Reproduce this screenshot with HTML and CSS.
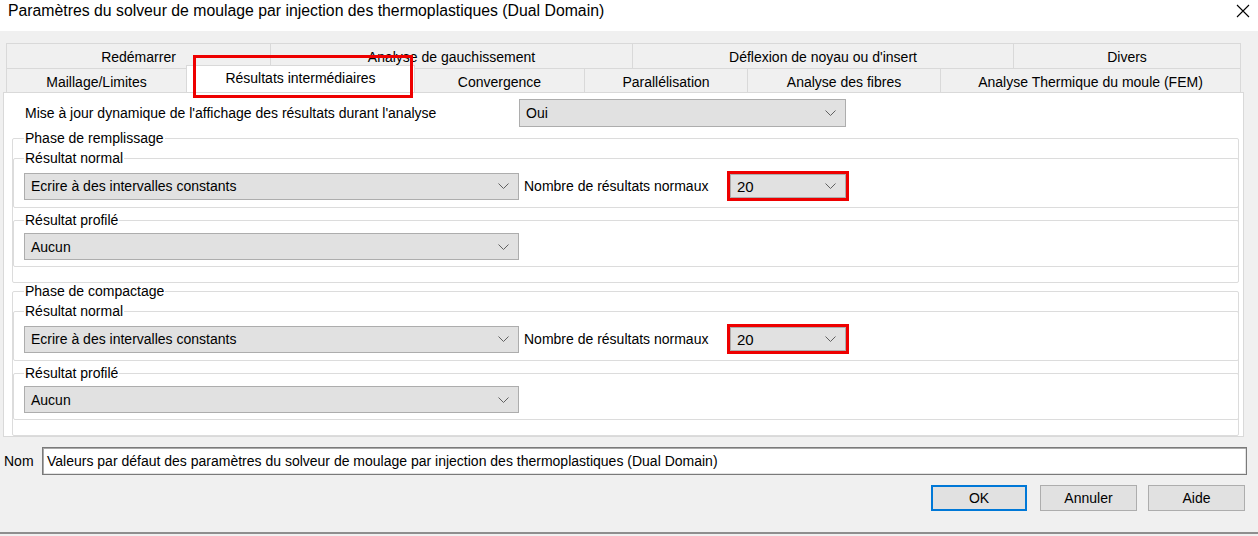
FILE: index.html
```html
<!DOCTYPE html>
<html lang="fr">
<head>
  <meta charset="UTF-8">
  <title>Paramètres du solveur</title>
  <link rel="stylesheet" href="styles.css">
</head>
<body>
  <div class="window">
    <div class="titlebar">
      <span class="title">Paramètres du solveur de moulage par injection des thermoplastiques (Dual Domain)</span>
      <svg class="close" width="14" height="14" viewBox="0 0 14 14">
        <path d="M1 1 L13 13 M13 1 L1 13" stroke="#000" stroke-width="1.1" fill="none"/>
      </svg>
    </div>

    <div class="content">
      <div class="tabs">
        <div class="tab-row back">
          <div class="tab">Redémarrer</div>
          <div class="tab">Analyse de gauchissement</div>
          <div class="tab">Déflexion de noyau ou d'insert</div>
          <div class="tab">Divers</div>
        </div>
        <div class="tab-row front">
          <div class="tab">Maillage/Limites</div>
          <div class="tab selected">Résultats intermédiaires<span class="mark tab-mark"></span></div>
          <div class="tab">Convergence</div>
          <div class="tab">Parallélisation</div>
          <div class="tab">Analyse des fibres</div>
          <div class="tab">Analyse Thermique du moule (FEM)</div>
        </div>
      </div>

      <div class="panel">
        <div class="dyn-row">
          <span class="dyn-label">Mise à jour dynamique de l'affichage des résultats durant l'analyse</span>
          <div class="combo combo-oui"><span>Oui</span><svg class="chev" width="11" height="6" viewBox="0 0 11 6"><path d="M0.5 0.5 L5.5 5.5 L10.5 0.5" stroke="#606060" fill="none"/></svg></div>
        </div>

        <fieldset class="phase">
          <legend>Phase de remplissage</legend>
          <fieldset class="sub">
            <legend>Résultat normal</legend>
            <div class="sub-row">
              <div class="combo combo-wide"><span>Ecrire à des intervalles constants</span><svg class="chev" width="11" height="6" viewBox="0 0 11 6"><path d="M0.5 0.5 L5.5 5.5 L10.5 0.5" stroke="#606060" fill="none"/></svg></div>
              <span class="count-label">Nombre de résultats normaux</span>
              <div class="mark-box">
                <div class="combo combo-count"><span>20</span><svg class="chev" width="11" height="6" viewBox="0 0 11 6"><path d="M0.5 0.5 L5.5 5.5 L10.5 0.5" stroke="#606060" fill="none"/></svg></div>
              </div>
            </div>
          </fieldset>
          <fieldset class="sub">
            <legend>Résultat profilé</legend>
            <div class="sub-row">
              <div class="combo combo-wide"><span>Aucun</span><svg class="chev" width="11" height="6" viewBox="0 0 11 6"><path d="M0.5 0.5 L5.5 5.5 L10.5 0.5" stroke="#606060" fill="none"/></svg></div>
            </div>
          </fieldset>
        </fieldset>

        <fieldset class="phase">
          <legend>Phase de compactage</legend>
          <fieldset class="sub">
            <legend>Résultat normal</legend>
            <div class="sub-row">
              <div class="combo combo-wide"><span>Ecrire à des intervalles constants</span><svg class="chev" width="11" height="6" viewBox="0 0 11 6"><path d="M0.5 0.5 L5.5 5.5 L10.5 0.5" stroke="#606060" fill="none"/></svg></div>
              <span class="count-label">Nombre de résultats normaux</span>
              <div class="mark-box">
                <div class="combo combo-count"><span>20</span><svg class="chev" width="11" height="6" viewBox="0 0 11 6"><path d="M0.5 0.5 L5.5 5.5 L10.5 0.5" stroke="#606060" fill="none"/></svg></div>
              </div>
            </div>
          </fieldset>
          <fieldset class="sub">
            <legend>Résultat profilé</legend>
            <div class="sub-row">
              <div class="combo combo-wide"><span>Aucun</span><svg class="chev" width="11" height="6" viewBox="0 0 11 6"><path d="M0.5 0.5 L5.5 5.5 L10.5 0.5" stroke="#606060" fill="none"/></svg></div>
            </div>
          </fieldset>
        </fieldset>
      </div>

      <div class="name-row">
        <span class="name-label">Nom</span>
        <div class="name-input">Valeurs par défaut des paramètres du solveur de moulage par injection des thermoplastiques (Dual Domain)</div>
      </div>

      <div class="buttons">
        <button class="btn btn-default">OK</button>
        <button class="btn">Annuler</button>
        <button class="btn">Aide</button>
      </div>
    </div>
  </div>
</body>
</html>
```

FILE: styles.css
```css
body {
  margin: 0;
  padding: 0;
  width: 1258px;
  height: 536px;
  overflow: hidden;
  background-color: #f0f0f0;
  font-family: 'Liberation Sans', Arial, sans-serif;
  font-size: 14px;
  color: #000;
}

.window {
  height: 532px;
  border-bottom: 2px solid #8e8e8e;
}

/* title bar */
.titlebar {
  height: 31px;
  background-color: #fff;
  display: flex;
  justify-content: space-between;
  align-items: flex-start;
  padding: 0 8px;
}

.title {
  font-size: 15.8px;
  margin-top: 2px;
}

.close {
  margin-top: 4px;
}

.content {
  padding: 12px 11px 0 3px;
}

/* tabs */
.tabs {
  margin-left: 3px;
  width: 1234px;
}

.tab-row {
  display: grid;
}

.tab-row.back {
  grid-template-columns: 264px 362px 381px 227px;
}

.tab-row.front {
  grid-template-columns: 180px 228px 170px 163px 193px 300px;
}

.tab {
  height: 23px;
  border: 1px solid #d9d9d9;
  border-bottom: none;
  margin-right: -1px;
  background-color: #f0f0f0;
  display: flex;
  justify-content: center;
  align-items: center;
  padding-top: 1px;
  box-sizing: content-box;
  white-space: nowrap;
}

.tab-row.front .tab {
  height: 21px;
  padding-top: 2px;
}

.tab-row.front .tab.selected {
  position: relative;
  z-index: 2;
  height: 27px;
  margin-top: -3px;
  margin-bottom: -1px;
  background-color: #fff;
  padding: 0 0 2px;
  box-sizing: border-box;
}

/* red annotation boxes */
.mark {
  position: absolute;
  border: 3px solid #ee0000;
}

.tab-mark {
  top: -11px;
  left: 6px;
  right: 1px;
  bottom: -6px;
}

.mark-box {
  border: 3px solid #ee0000;
  display: flex;
}

/* panel */
.panel {
  position: relative;
  z-index: 1;
  width: 1241px;
  height: 345px;
  background-color: #fff;
  border: 1px solid #d9d9d9;
  padding: 6px 4px 0 8px;
  box-sizing: border-box;
  overflow: hidden;
}

.dyn-row {
  display: flex;
  align-items: center;
}

.dyn-label {
  width: 494px;
  padding-left: 13px;
}

.combo {
  height: 28px;
  background-color: #e1e1e1;
  border: 1px solid #adadad;
  box-sizing: border-box;
  display: flex;
  align-items: center;
  justify-content: space-between;
  padding: 0 9px 0 6px;
}

.combo-oui {
  width: 327px;
}

.combo-wide {
  width: 495px;
  height: 27px;
}

.combo-count {
  width: 116px;
  height: 24px;
  font-size: 15px;
}

.chev {
  flex: none;
}

fieldset {
  margin: 0;
  border: 1px solid #dcdcdc;
  border-radius: 2px;
}

legend {
  padding: 0 1px;
  line-height: 16px;
}

.phase {
  margin-top: 3px;
  padding: 4px 0 15px 0;
}

.phase + .phase {
  margin-top: 0;
}

.phase > legend {
  margin-left: 11px;
}

.sub {
  padding: 5px 10px 6px 10px;
  margin-right: -1px;
}

.sub + .sub {
  margin-top: 4px;
}

.sub-row {
  display: flex;
  align-items: center;
}

.count-label {
  width: 208px;
  padding-left: 5px;
  box-sizing: border-box;
  white-space: nowrap;
}

/* name + buttons */
.name-row {
  display: flex;
  align-items: center;
  margin-top: 10px;
}

.name-label {
  width: 38px;
  padding-left: 1px;
}

.name-input {
  width: 1205px;
  height: 28px;
  box-sizing: border-box;
  background-color: #fff;
  border: 1px solid #7a7a7a;
  box-shadow: inset 1px 1px 0 #a9a9a9, inset -1px -1px 0 #e3e3e3;
  padding: 0 4px;
  display: flex;
  align-items: center;
  white-space: nowrap;
}

.buttons {
  display: flex;
  justify-content: flex-end;
  gap: 11px;
  margin-top: 10px;
  margin-right: 2px;
}

.btn {
  width: 97px;
  height: 26px;
  background-color: #e1e1e1;
  border: 1px solid #adadad;
  font-family: 'Liberation Sans', Arial, sans-serif;
  font-size: 14px;
  color: #000;
  padding: 0;
}

.btn-default {
  width: 96px;
  border: 2px solid #0078d7;
  margin-right: 2px;
}
```
